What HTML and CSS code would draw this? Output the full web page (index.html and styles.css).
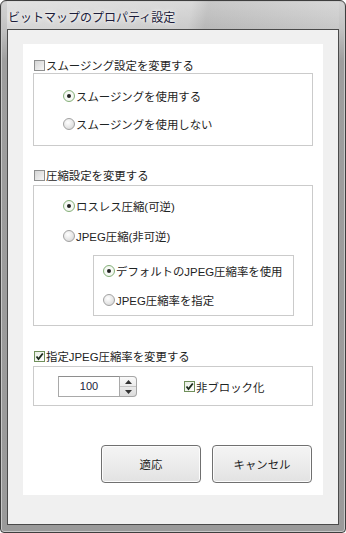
FILE: index.html
```html
<!DOCTYPE html>
<html lang="ja">
<head>
    <meta charset="UTF-8">
    <title>ビットマップのプロパティ設定</title>
    <link rel="stylesheet" href="styles.css">
</head>
<body>
    <div class="window">
        <div class="titlebar">
            <span class="title">ビットマップのプロパティ設定</span>
        </div>
        <div class="client">
            <div class="panel">
                <div class="legend"><span class="check"></span>スムージング設定を変更する</div>
                <div class="group group-smooth">
                    <div class="option"><span class="radio on"></span>スムージングを使用する</div>
                    <div class="option"><span class="radio"></span>スムージングを使用しない</div>
                </div>

                <div class="legend legend-compress"><span class="check"></span>圧縮設定を変更する</div>
                <div class="group group-compress">
                    <div class="option"><span class="radio on"></span>ロスレス圧縮(可逆)</div>
                    <div class="option"><span class="radio"></span>JPEG圧縮(非可逆)</div>
                    <div class="group group-jpeg">
                        <div class="option"><span class="radio on"></span>デフォルトのJPEG圧縮率を使用</div>
                        <div class="option"><span class="radio"></span>JPEG圧縮率を指定</div>
                    </div>
                </div>

                <div class="legend legend-rate"><span class="check checked"><svg width="11" height="11" viewBox="0 0 11 11"><path d="M2.5 5.5 L4.5 8 L8.8 2.5" fill="none" stroke="#1c2a1c" stroke-width="1.8"/></svg></span>指定JPEG圧縮率を変更する</div>
                <div class="group group-rate">
                    <div class="spinner">
                        <div class="spin-value">100</div>
                        <div class="spin-buttons">
                            <div class="spin-btn"><svg width="7" height="4" viewBox="0 0 7 4"><path d="M0 4 L3.5 0 L7 4 Z" fill="#333"/></svg></div>
                            <div class="spin-btn"><svg width="7" height="4" viewBox="0 0 7 4"><path d="M0 0 L3.5 4 L7 0 Z" fill="#333"/></svg></div>
                        </div>
                    </div>
                    <div class="inline-check"><span class="check checked"><svg width="11" height="11" viewBox="0 0 11 11"><path d="M2.5 5.5 L4.5 8 L8.8 2.5" fill="none" stroke="#1c2a1c" stroke-width="1.8"/></svg></span>非ブロック化</div>
                </div>

                <div class="actions">
                    <button class="btn">適応</button>
                    <button class="btn">キャンセル</button>
                </div>
            </div>
        </div>
    </div>
</body>
</html>
```

FILE: styles.css
```css
* {
    margin: 0;
    padding: 0;
    box-sizing: border-box;
}

body {
    background: #ffffff;
    font-family: 'Liberation Sans', 'Noto Sans CJK JP', sans-serif;
    font-size: 11.4px;
    color: #1e2424;
}

.window {
    width: 346px;
    height: 533px;
    border: 1px solid #3e3e3e;
    border-radius: 6px 6px 4px 4px;
    background: linear-gradient(180deg, #d4d4d4 0px, #c2c2c2 28px, #9e9e9e 60px, #9a9a9a 100%);
    box-shadow: inset 0 0 0 1px #c8c8c8;
    padding: 0 6px 7px;
}

.titlebar {
    height: 28px;
    display: flex;
    align-items: center;
    padding-left: 1px;
    background: linear-gradient(100deg, rgba(255,255,255,0.35) 0%, rgba(255,255,255,0.15) 55%, rgba(0,0,0,0.05) 60%, rgba(255,255,255,0.1) 100%);
}

.title {
    font-size: 12px;
    color: #1c1c3a;
    text-shadow: 0 0 6px #ffffff, 0 0 3px #ffffff;
    padding-top: 2px;
}

.client {
    height: 496px;
    border: 1px solid #4a4a4a;
    background: #f0f0f0;
    padding: 14px 15px 0;
}

.panel {
    height: 451px;
    background: #ffffff;
    padding: 13px 10px 0;
}

.legend {
    height: 16px;
    display: flex;
    align-items: center;
    padding-left: 1px;
}

.legend-compress {
    margin-top: 21px;
}

.legend-rate {
    margin-top: 22px;
}

.check {
    width: 11px;
    height: 11px;
    border: 1px solid #8e8f8f;
    background: linear-gradient(135deg, #d4d4d4, #f6f6f6);
    margin-right: 1px;
    flex-shrink: 0;
    position: relative;
}

.check.checked {
    border-color: #6f8f5a;
    background: linear-gradient(135deg, #e8eee4, #ffffff);
}

.check svg {
    position: absolute;
    left: -1px;
    top: -1px;
}

.group {
    border: 1px solid #cbcbcb;
}

.group-smooth {
    height: 73px;
    padding: 8px 0 0 29px;
}

.group-smooth .option {
    height: 28px;
}

.group-compress {
    margin-top: 2px;
    height: 141px;
    padding: 5px 0 0 29px;
}

.option {
    height: 30px;
    display: flex;
    align-items: center;
}

.radio {
    width: 12px;
    height: 12px;
    border-radius: 50%;
    border: 1px solid #a2a2a2;
    background: radial-gradient(circle at 40% 35%, #ffffff 0%, #e4e4e4 60%, #cfcfcf 100%);
    margin-right: 1px;
    flex-shrink: 0;
    display: flex;
    align-items: center;
    justify-content: center;
}

.radio.on {
    border-color: #86b07a;
    background: radial-gradient(circle, #ffffff 0%, #f4f8f2 60%, #dde8d8 100%);
}

.radio.on::after {
    content: "";
    width: 4px;
    height: 4px;
    border-radius: 50%;
    background: #222222;
}

.group-jpeg {
    margin: 4px 0 0 30px;
    width: 201px;
    height: 61px;
    padding-left: 9px;
}

.group-jpeg .option {
    height: 29px;
}

.group-rate {
    margin-top: 2px;
    height: 40px;
    padding: 9px 0 0 24px;
    display: flex;
    align-items: flex-start;
}

.spinner {
    display: flex;
    height: 21px;
}

.spin-value {
    width: 62px;
    height: 21px;
    border: 1px solid #a9a9a9;
    border-top-color: #8e8e8e;
    background: #ffffff;
    text-align: center;
    line-height: 19px;
    font-size: 11px;
    color: #1a2440;
}

.spin-buttons {
    width: 17px;
    height: 21px;
    display: flex;
    flex-direction: column;
    border: 1px solid #a6a6a6;
    border-left: none;
    border-radius: 0 4px 4px 0;
    overflow: hidden;
    background: linear-gradient(180deg, #fafafa, #dcdcdc);
}

.spin-btn {
    flex: 1;
    display: flex;
    align-items: center;
    justify-content: center;
}

.spin-btn + .spin-btn {
    border-top: 1px solid #c4c4c4;
}

.inline-check {
    margin-left: 47px;
    height: 21px;
    display: flex;
    align-items: center;
}

.actions {
    margin-top: 39px;
    display: flex;
    justify-content: flex-end;
    gap: 11px;
    padding-right: 1px;
}

.btn {
    width: 100px;
    height: 38px;
    border: 1px solid #707070;
    border-radius: 4px;
    background: linear-gradient(180deg, #f4f4f4 0%, #ececec 50%, #e2e2e2 100%);
    box-shadow: inset 0 0 0 1px #fcfcfc;
    font-family: 'Liberation Sans', 'Noto Sans CJK JP', sans-serif;
    font-size: 11.4px;
    color: #1e2424;
}
```
